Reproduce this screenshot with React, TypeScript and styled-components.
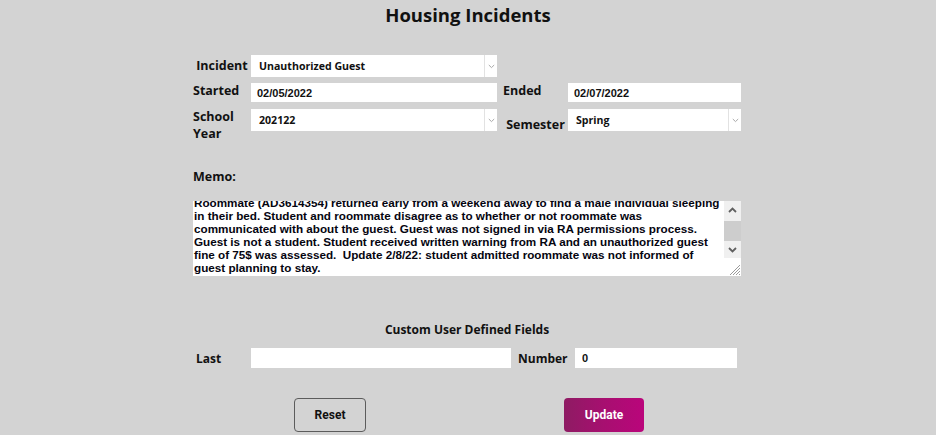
import React, { useEffect, useRef } from 'react';
import styled, { createGlobalStyle } from 'styled-components';

const GlobalStyle = createGlobalStyle`
  html, body {
    margin: 0;
    padding: 0;
    background: #d3d3d3;
  }
  * {
    box-sizing: border-box;
  }
`;

const Page = styled.div`
  width: 936px;
  height: 435px;
  background: #d3d3d3;
  display: flex;
  flex-direction: column;
  align-items: center;
  font-family: 'Open Sans', 'Liberation Sans', sans-serif;
  color: #111;
  overflow: hidden;
`;

const Title = styled.h1`
  margin: 3px 0 0;
  font-size: 18.5px;
  line-height: 24px;
  font-weight: 700;
  color: #111;
`;

const Body = styled.div`
  width: 548px;
  margin-left: -2px;
  display: flex;
  flex-direction: column;
`;

const FormGrid = styled.div`
  margin-top: 28px;
  display: grid;
  grid-template-columns: 58px 246px 6px 65px 173px;
  grid-template-rows: 22px 20px 32px;
  row-gap: 6px;
`;

const Label = styled.div<{ col: number; align?: string }>`
  grid-column: ${({ col }) => col};
  align-self: ${({ align }) => align || 'start'};
  font-size: 12.5px;
  line-height: 16.5px;
  font-weight: 700;
`;

const Field = styled.div<{ col: number; h: number }>`
  grid-column: ${({ col }) => col};
  height: ${({ h }) => h}px;
  background: #fff;
  display: flex;
  align-items: stretch;
`;

const TextInput = styled.input`
  flex: 1;
  min-width: 0;
  border: none;
  outline: none;
  background: transparent;
  padding: 0 0 0 6px;
  font-family: 'Liberation Sans', Arial, sans-serif;
  font-weight: 700;
  font-size: 11px;
  color: #111;
`;

const SelectValue = styled.div`
  flex: 1;
  display: flex;
  align-items: center;
  padding-left: 8px;
  font-size: 10.6px;
  font-weight: 700;
  color: #111;
`;

const ArrowCell = styled.div`
  width: 13px;
  border-left: 1px solid #e2e2e2;
  display: flex;
  align-items: center;
  justify-content: center;
`;

const MemoLabel = styled.div`
  margin-top: 28px;
  font-size: 12.5px;
  line-height: 16px;
  font-weight: 700;
`;

const MemoBox = styled.div`
  margin-top: 16px;
  height: 75px;
  display: flex;
  background: #fff;
`;

const MemoText = styled.textarea`
  flex: 1;
  height: 75px;
  border: none;
  outline: none;
  resize: none;
  overflow: hidden;
  white-space: pre;
  padding: 2px 0 2px 1px;
  font-family: 'Liberation Sans', Arial, sans-serif;
  font-weight: 700;
  font-size: 11.7px;
  line-height: 13px;
  color: #050510;
  background: #fff;
`;

const ScrollColumn = styled.div`
  width: 17px;
  display: flex;
  flex-direction: column;
`;

const ScrollTrack = styled.div`
  height: 57px;
  background: #f0f0f0;
  display: flex;
  flex-direction: column;
`;

const ScrollButton = styled.div`
  height: 17px;
  display: flex;
  align-items: center;
  justify-content: center;
`;

const ScrollGap = styled.div`
  height: 3px;
`;

const ScrollThumb = styled.div`
  height: 20px;
  background: #cdcdcd;
`;

const Grip = styled.div`
  flex: 1;
  display: flex;
  align-items: flex-end;
  justify-content: flex-end;
  background: #fff;
`;

const SectionTitle = styled.div`
  margin-top: 46px;
  text-align: center;
  font-size: 12px;
  line-height: 16px;
  font-weight: 700;
`;

const CustomRow = styled.div`
  margin-top: 10px;
  display: grid;
  grid-template-columns: 55px 260px 64px 162px;
  height: 20px;
  padding-left: 3px;
`;

const RowLabel = styled.div<{ indent?: number }>`
  display: flex;
  align-items: center;
  padding-left: ${({ indent }) => indent || 0}px;
  font-size: 12px;
  font-weight: 700;
`;

const RowInput = styled.input`
  border: none;
  outline: none;
  background: #fff;
  padding: 0 0 0 7px;
  font-family: 'Liberation Sans', Arial, sans-serif;
  font-weight: 700;
  font-size: 11px;
  color: #111;
`;

const ButtonRow = styled.div`
  margin-top: 30px;
  display: grid;
  grid-template-columns: 1fr 1fr;
  justify-items: center;
`;

const Button = styled.button<{ primary?: boolean }>`
  height: 34px;
  padding: 0 ${({ primary }) => (primary ? 21 : 20)}px;
  border-radius: 4px;
  border: ${({ primary }) => (primary ? 'none' : '1.5px solid #5c5c5c')};
  background: ${({ primary }) =>
    primary ? 'linear-gradient(90deg, #8e1b63 0%, #a70f70 50%, #ba057b 100%)' : 'transparent'};
  color: ${({ primary }) => (primary ? '#fff' : '#111')};
  font-family: Roboto, 'Liberation Sans', sans-serif;
  font-weight: 700;
  font-size: 12px;
  cursor: pointer;
`;

const Chevron = () => (
  <svg width="7" height="5" viewBox="0 0 7 5">
    <path d="M0.8 1 L3.5 3.6 L6.2 1" fill="none" stroke="#a8a8a8" strokeWidth="1" />
  </svg>
);

const ArrowUp = () => (
  <svg width="9" height="6" viewBox="0 0 9 6">
    <path d="M1 5 L4.5 1.5 L8 5" fill="none" stroke="#606060" strokeWidth="1.8" />
  </svg>
);

const ArrowDown = () => (
  <svg width="9" height="6" viewBox="0 0 9 6">
    <path d="M1 1 L4.5 4.5 L8 1" fill="none" stroke="#606060" strokeWidth="1.8" />
  </svg>
);

const GripLines = () => (
  <svg width="14" height="14" viewBox="0 0 14 14">
    <path d="M13 3 L3 13 M13 6 L6 13 M13 9 L9 13 M13 12 L12 13" stroke="#9a9a9a" strokeWidth="1" />
  </svg>
);

// line breaks follow the wrap of the original textarea
const memo = [
  'Roommate (AD3614354) returned early from a weekend away to find a male individual sleeping',
  'in their bed. Student and roommate disagree as to whether or not roommate was',
  'communicated with about the guest. Guest was not signed in via RA permissions process.',
  'Guest is not a student. Student received written warning from RA and an unauthorized guest',
  'fine of 75$ was assessed.  Update 2/8/22: student admitted roommate was not informed of',
  'guest planning to stay.',
].join('\n');

const App: React.FC = () => {
  const memoRef = useRef<HTMLTextAreaElement>(null);

  useEffect(() => {
    if (memoRef.current) memoRef.current.scrollTop = memoRef.current.scrollHeight;
  }, []);

  return (
    <>
      <GlobalStyle />
      <Page>
        <Title>Housing Incidents</Title>
        <Body>
          <FormGrid>
            <Label col={1} align="center">Incident</Label>
            <Field col={2} h={22}>
              <SelectValue>Unauthorized Guest</SelectValue>
              <ArrowCell><Chevron /></ArrowCell>
            </Field>

            <Label col={1}>Started</Label>
            <Field col={2} h={19}>
              <TextInput defaultValue="02/05/2022" />
            </Field>
            <Label col={4}>Ended</Label>
            <Field col={5} h={19}>
              <TextInput defaultValue="02/07/2022" />
            </Field>

            <Label col={1}>School<br />Year</Label>
            <Field col={2} h={22}>
              <SelectValue>202122</SelectValue>
              <ArrowCell><Chevron /></ArrowCell>
            </Field>
            <Label col={4} align="center">Semester</Label>
            <Field col={5} h={22}>
              <SelectValue>Spring</SelectValue>
              <ArrowCell><Chevron /></ArrowCell>
            </Field>
          </FormGrid>

          <MemoLabel>Memo:</MemoLabel>
          <MemoBox>
            <MemoText ref={memoRef} defaultValue={memo} />
            <ScrollColumn>
              <ScrollTrack>
                <ScrollButton><ArrowUp /></ScrollButton>
                <ScrollGap />
                <ScrollThumb />
                <ScrollButton><ArrowDown /></ScrollButton>
              </ScrollTrack>
              <Grip><GripLines /></Grip>
            </ScrollColumn>
          </MemoBox>

          <SectionTitle>Custom User Defined Fields</SectionTitle>
          <CustomRow>
            <RowLabel>Last</RowLabel>
            <RowInput defaultValue="" />
            <RowLabel indent={7}>Number</RowLabel>
            <RowInput defaultValue="0" />
          </CustomRow>

          <ButtonRow>
            <Button>Reset</Button>
            <Button primary>Update</Button>
          </ButtonRow>
        </Body>
      </Page>
    </>
  );
};

export default App;
